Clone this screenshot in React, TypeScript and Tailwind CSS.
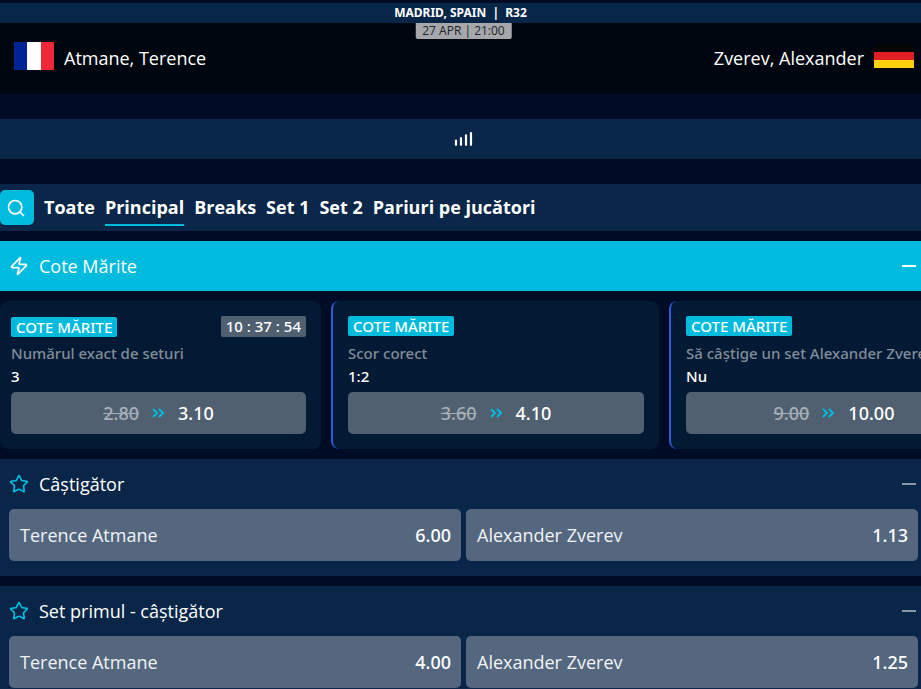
import { Search, Star, Zap } from "lucide-react";
import { clsx } from "clsx";

type Boost = {
  id: number;
  market: string;
  pick: string;
  oldOdds: string;
  newOdds: string;
  countdown?: string;
};

type Market = {
  name: string;
  outcomes: { label: string; odds: string }[];
};

const tabs = ["Toate", "Principal", "Breaks", "Set 1", "Set 2", "Pariuri pe jucători"];
const activeTab = "Principal";

const boosts: Boost[] = [
  {
    id: 1,
    market: "Numărul exact de seturi",
    pick: "3",
    oldOdds: "2.80",
    newOdds: "3.10",
    countdown: "10 : 37 : 54",
  },
  { id: 2, market: "Scor corect", pick: "1:2", oldOdds: "3.60", newOdds: "4.10" },
  {
    id: 3,
    market: "Să câștige un set Alexander Zverev",
    pick: "Nu",
    oldOdds: "9.00",
    newOdds: "10.00",
  },
];

const markets: Market[] = [
  {
    name: "Câștigător",
    outcomes: [
      { label: "Terence Atmane", odds: "6.00" },
      { label: "Alexander Zverev", odds: "1.13" },
    ],
  },
  {
    name: "Set primul - câștigător",
    outcomes: [
      { label: "Terence Atmane", odds: "4.00" },
      { label: "Alexander Zverev", odds: "1.25" },
    ],
  },
];

function FrenchFlag() {
  return (
    <svg viewBox="0 0 40 28" className="h-7 w-10" role="img" aria-label="Franța">
      <rect width="13" height="28" fill="#002395" />
      <rect x="13" width="14" height="28" fill="#ffffff" />
      <rect x="27" width="13" height="28" fill="#ed2939" />
    </svg>
  );
}

function GermanFlag() {
  return (
    <svg viewBox="0 0 40 24" className="h-6 w-10" role="img" aria-label="Germania">
      <rect width="40" height="8" fill="#050606" />
      <rect y="8" width="40" height="8" fill="#e01e25" />
      <rect y="16" width="40" height="8" fill="#fecf0b" />
    </svg>
  );
}

function BarsIcon() {
  return (
    <svg
      viewBox="0 0 20 16"
      className="h-4 w-5"
      fill="none"
      stroke="#ffffff"
      strokeWidth="2.2"
      strokeLinecap="round"
      aria-hidden="true"
    >
      <path d="M2 9.5v4.3M7 7v6.8M12 4.4v9.4M17 2v11.8" />
    </svg>
  );
}

function DoubleChevron() {
  return (
    <svg
      viewBox="0 0 13 10"
      className="h-[10px] w-[13px]"
      fill="none"
      stroke="#00bbdd"
      strokeWidth="2"
      aria-hidden="true"
    >
      <path d="M1 1l4 4-4 4M7 1l4 4-4 4" />
    </svg>
  );
}

function CollapseButton({ label, className }: { label: string; className: string }) {
  return (
    <button type="button" aria-label={label} className="flex h-6 w-[14px] items-center">
      <span className={clsx("h-[2px] w-full", className)} />
    </button>
  );
}

function BoostCard({ boost, first }: { boost: Boost; first: boolean }) {
  return (
    <article
      className={clsx(
        "shrink-0 rounded-lg bg-[#031a34] py-[15px] pr-[15px] font-['Noto_Sans','Open_Sans',sans-serif]",
        first ? "w-[321px] pl-[11px]" : "w-[328px] border-l-2 border-[#2b5bd7] pl-[15px]",
      )}
    >
      <div
        className={clsx(
          "flex h-[21px] justify-between",
          boost.countdown ? "items-end" : "items-start",
        )}
      >
        <span className="rounded-xs bg-[#00bbdd] px-[5px] text-[15px] leading-5 font-medium">
          COTE MĂRITE
        </span>
        {boost.countdown && (
          <time className="rounded-xs bg-[#506071] px-[5px] text-[15px] leading-[21px] font-medium">
            {boost.countdown}
          </time>
        )}
      </div>
      <h3 className="mt-[6px] text-[15px] leading-5 font-medium whitespace-nowrap text-[#818d99]">
        {boost.market}
      </h3>
      <p className="mt-[2px] text-[15px] leading-[22px] font-medium">{boost.pick}</p>
      <button
        type="button"
        className="mt-[5px] flex h-[42px] w-full items-center justify-center rounded-[5px] bg-[#506071] text-lg font-medium"
      >
        <s className="text-[#a7afb8]">{boost.oldOdds}</s>
        <span className="mx-[13px]">
          <DoubleChevron />
        </span>
        <span>{boost.newOdds}</span>
      </button>
    </article>
  );
}

function MarketSection({ market }: { market: Market }) {
  return (
    <section className="mt-[10px] bg-[#092648] pb-[15px]">
      <div className="flex h-[50px] items-center pr-[5px] pl-[9px]">
        <button type="button" aria-label={`Favorit: ${market.name}`}>
          <Star className="size-5 text-[#00bbdd]" />
        </button>
        <h2 className="ml-[10px] flex-1 text-lg font-medium">{market.name}</h2>
        <CollapseButton label={`Restrânge ${market.name}`} className="bg-[#8996a6]" />
      </div>
      <div className="grid grid-cols-2 gap-[5px] pr-[3px] pl-[9px]">
        {market.outcomes.map((outcome) => (
          <button
            key={outcome.label}
            type="button"
            className="flex h-[52px] items-center justify-between rounded-[5px] bg-[#54677f] pr-[10px] pl-[11px] text-lg font-medium"
          >
            <span className="text-[#f1f3f5]">{outcome.label}</span>
            <span className="font-['Noto_Sans','Open_Sans',sans-serif]">{outcome.odds}</span>
          </button>
        ))}
      </div>
    </section>
  );
}

export default function App() {
  return (
    <main className="h-screen overflow-hidden bg-[#000b25] pt-[3px] font-['Open_Sans','Noto_Sans',sans-serif] text-white">
      <header>
        <div className="bg-[#082648] text-center font-['Noto_Sans','Open_Sans',sans-serif] text-xs leading-5 font-bold whitespace-pre">
          MADRID, SPAIN  |  R32
        </div>
        <div className="relative flex h-[71px] items-center justify-between bg-[#00060f] pr-[7px] pb-[2px] pl-[14px] text-lg font-medium">
          <div className="flex items-center gap-[10px]">
            <div className="pb-[4px]">
              <FrenchFlag />
            </div>
            <span>Atmane, Terence</span>
          </div>
          <time className="absolute top-0 left-1/2 ml-[3px] -translate-x-1/2 rounded-b-xs bg-[#a5a7ab] px-[7px] text-xs leading-4 font-normal text-[#202329]">
            27 APR | 21:00
          </time>
          <div className="flex items-center gap-[10px]">
            <span>Zverev, Alexander</span>
            <div className="pb-[4px]">
              <GermanFlag />
            </div>
          </div>
        </div>
      </header>

      <button
        type="button"
        aria-label="Statistici"
        className="mt-[25px] flex h-10 w-full items-center justify-center bg-[#082749] pl-[7px]"
      >
        <BarsIcon />
      </button>

      <nav className="mt-[25px] flex h-[47px] items-center bg-[#0a2648]">
        <button
          type="button"
          aria-label="Caută"
          className="mr-[10px] flex h-[35px] w-[34px] items-center rounded-[5px] bg-[#00bbdd] pl-[6px]"
        >
          <Search className="size-5" />
        </button>
        <div className="flex gap-[10px]">
          {tabs.map((tab) => (
            <button
              key={tab}
              type="button"
              className={clsx(
                "h-[37px] border-b-2 text-lg font-bold",
                tab === activeTab ? "border-[#00bbdd]" : "border-transparent",
              )}
            >
              {tab}
            </button>
          ))}
        </div>
      </nav>

      <section className="mt-[10px]">
        <div className="flex h-[50px] items-center bg-[#00bbdd] pr-[5px] pl-[9px]">
          <Zap className="size-5" />
          <h2 className="ml-[10px] flex-1 text-lg font-medium">Cote Mărite</h2>
          <CollapseButton label="Restrânge Cote Mărite" className="bg-white" />
        </div>
        <div className="mt-[10px] flex gap-[10px] overflow-hidden">
          {boosts.map((boost, i) => (
            <BoostCard key={boost.id} boost={boost} first={i === 0} />
          ))}
        </div>
      </section>

      {markets.map((market) => (
        <MarketSection key={market.name} market={market} />
      ))}
    </main>
  );
}
